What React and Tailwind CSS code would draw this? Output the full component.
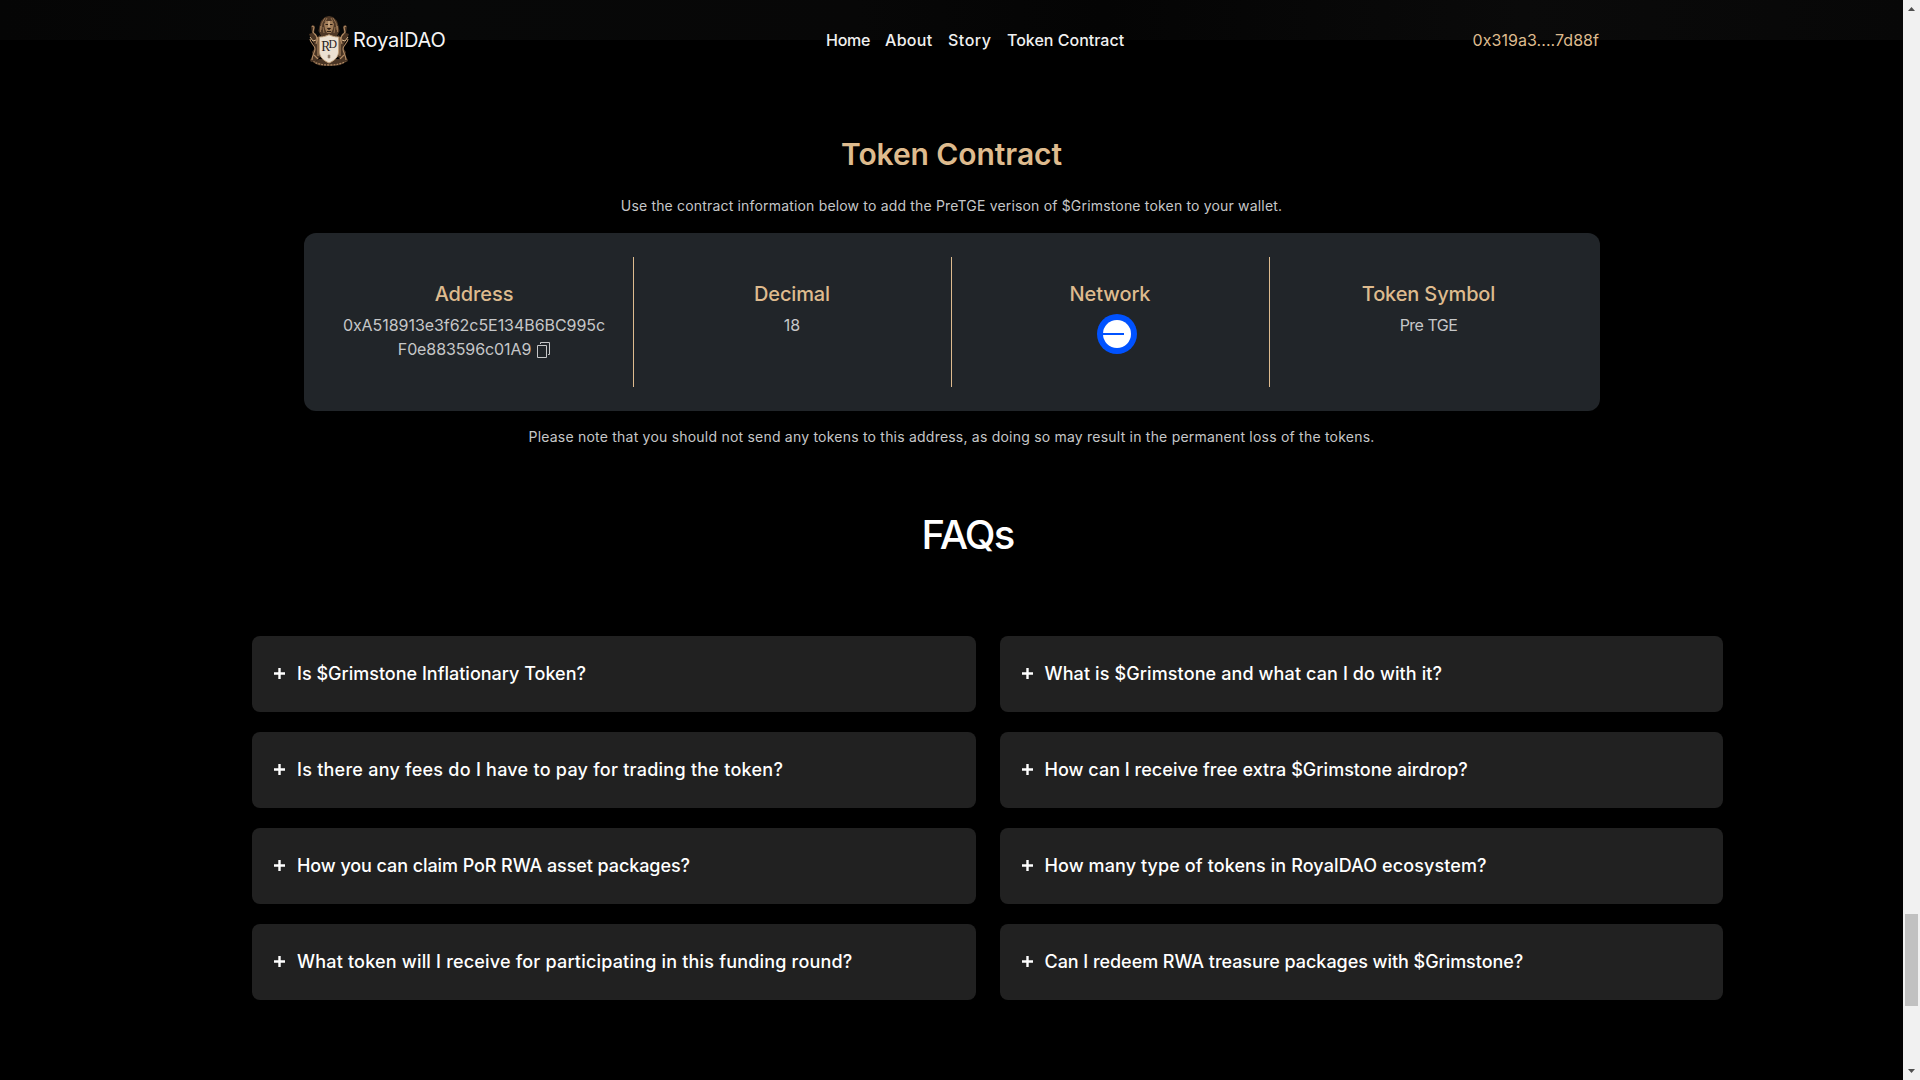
const leftFaqs = [
  { q: "Is $Grimstone Inflationary Token?", cls: "tracking-[0px]" },
  { q: "Is there any fees do I have to pay for trading the token?", cls: "tracking-[0.25px]" },
  { q: "How you can claim PoR RWA asset packages?", cls: "tracking-[-0.08px]" },
  { q: "What token will I receive for participating in this funding round?", cls: "tracking-[0.19px]" },
];

const rightFaqs = [
  { q: "What is $Grimstone and what can I do with it?", cls: "tracking-[0.11px]" },
  { q: "How can I receive free extra $Grimstone airdrop?", cls: "tracking-[0.03px]" },
  { q: "How many type of tokens in RoyalDAO ecosystem?", cls: "tracking-[0.1px]" },
  { q: "Can I redeem RWA treasure packages with $Grimstone?", cls: "tracking-[-0.05px]" },
];

function Supporter() {
  return (
    <g>
      <path d="M9 16l3-1 1 3-1 5 3 4 3-2v22l-4 4-5 1-1-2 3-4-1-4 3-4-1-4-3-5-2-5 3-1z" fill="#4a3524" />
      <path d="M10 16l2 1-1 5 4 5M8 29c0 4 5 6 5 10s-3 6-3 11M13 24c3 3 2 7 1 10M16 27v19M12 45l4 4" stroke="#b38c65" strokeWidth="1.1" />
      <path d="M8 27l3 4 3-1" stroke="#dcb98d" />
    </g>
  );
}

function Crest() {
  return (
    <svg viewBox="6 4 44 54" className="h-[54px] w-11 shrink-0" fill="none">
      {/* base scrollwork */}
      <path d="M10 50c2 5 8 6 17 6s15-1 18-6c-3 1-5 1-7-1H17c-2 2-4 2-7 1z" fill="#4a3524" />
      <path d="M11 51c4 3 9 4 16 4s13-1 17-4" stroke="#b08a64" strokeWidth="1.3" strokeDasharray="2 1" />
      {/* supporters */}
      <Supporter />
      <g transform="matrix(-1 0 0 1 54 0)">
        <Supporter />
      </g>
      {/* lion head */}
      <path d="M27 6l4 1 4 4 1.500 5 1 5-2.500 5H19l-2.500-5 1-5 1.500-5 4-4z" fill="#4f3826" />
      <path d="M23 8l-3 5-1 7M31 8l3 5 1 7M21 17l1 6M33 17l-1 6M25 8l-2 4M29 8l2 4M18.500 16v6M35.500 16v6" stroke="#9c7853" strokeWidth=".9" />
      <path d="M24 11h6l2 3-1 5-2 4h-4l-2-4-1-5z" fill="#a07c58" />
      <path d="M23.500 14.500h2.500M28 14.500h2.500M25.500 18.500h3l-1.500 1zM25 21.500h4" stroke="#2a1c12" />
      <path d="M27 11v6" stroke="#e3c29a" />
      {/* shield */}
      <path d="M17.500 27c4 0 7-1 9.500-2.200 2.500 1.200 5.500 2.200 9.500 2.200v15c0 5-4 8.500-9.500 11-5.500-2.500-9.500-6-9.500-11z" fill="#ece1d2" stroke="#c3a27c" />
      <text x="19.200" y="41" fontSize="15" fontFamily="Liberation Serif, serif" fill="#29221d" textLength="9" lengthAdjust="spacingAndGlyphs">R</text>
      <text x="26.500" y="38" fontSize="12" fontFamily="Liberation Serif, serif" fill="#29221d" textLength="8.500" lengthAdjust="spacingAndGlyphs">D</text>
      <path d="M26 45h2v3h-2z" fill="#8a7663" stroke="#a08b76" strokeWidth=".6" />
    </svg>
  );
}

function CopyIcon() {
  return (
    <svg viewBox="0 0 13 16" className="mt-0.5 h-4 w-[13px]" fill="none" stroke="#c6c7c8">
      <path d="M0.500 3.500h9v12h-9z" />
      <path d="M3.500 2V.5h9v12H11" />
    </svg>
  );
}

function BaseIcon() {
  return (
    <svg viewBox="0 0 40 40" className="size-10">
      <circle cx="20" cy="20" r="20" fill="#0052ff" />
      <circle cx="20" cy="20" r="14" fill="#fff" />
      <path d="M5 19h22v2H5z" fill="#0052ff" />
    </svg>
  );
}

function Column({ title, last, titleClass = "", children }) {
  return (
    <div className={"flex h-[130px] w-[318px] flex-col items-center pt-[21px] " + (last ? "" : "border-r border-[#debb8e]")}>
      <h3 className={"text-[20px] leading-8 font-medium text-[#debb8e] " + titleClass}>{title}</h3>
      <div className="mt-[3px] flex flex-col items-center text-[16px] leading-6 text-[#c6c7c8]">{children}</div>
    </div>
  );
}

function FaqCard({ q, cls }) {
  return (
    <button className="flex h-[76px] w-full items-center rounded-lg bg-[#212121] pl-[22px] text-left">
      <svg viewBox="0 0 11 11" className="mr-3 mb-px size-[11px]" fill="#fff">
        <path d="M4.300 0h2.400v4.300H11v2.400H6.700V11H4.300V6.700H0V4.300h4.300z" />
      </svg>
      <span className={"text-[18px] leading-6 font-medium text-white " + cls}>{q}</span>
    </button>
  );
}

export default function App() {
  return (
    <div className="flex h-[1080px] w-full overflow-hidden bg-black font-['Inter',sans-serif] text-white">
      <div className="w-[1903px] shrink-0 bg-[linear-gradient(90deg,#050505,#070808_22%,#070707_45%,#040404_58%,#0a0a0a_80%,#070707)] bg-[length:100%_40px] bg-no-repeat">
        <header className="mx-auto flex h-[81px] w-[1295px] items-center">
          <a className="flex w-[522px] items-center pl-1">
            <Crest />
            <span className="-mt-[2px] pl-px text-[20px] tracking-[-0.1px] text-[#f5f5f5]">RoyalDAO</span>
          </a>
          <nav className="flex pb-px text-[16px] font-medium whitespace-nowrap text-[#f0f0f0]">
            <a className="w-[59px] tracking-[-0.25px]">Home</a>
            <a className="w-[63px] tracking-[0.3px]">About</a>
            <a className="w-[59px] tracking-[0.5px]">Story</a>
            <a className="tracking-[0px]">Token Contract</a>
          </nav>
          <span className="ml-auto pb-px text-[16px] tracking-[0.05px] text-[#debb8e]">0x319a3....7d88f</span>
        </header>

        <section className="flex flex-col items-center pt-[53px]">
          <h2 className="text-[30px] leading-10 font-semibold tracking-[-0.08px] text-[#debb8e]">Token Contract</h2>
          <p className="mt-[22px] text-[14px] leading-5 tracking-[0.175px] text-[#c6c7c8]">
            Use the contract information below to add the PreTGE verison of $Grimstone token to your wallet.
          </p>
          <div className="mt-[17px] flex h-[178px] w-[1296px] rounded-xl bg-[#212529] px-3 py-6">
            <Column title="Address" titleClass="tracking-[-0.1px]">
              <span className="tracking-[-0.05px]">0xA518913e3f62c5E134B6BC995c</span>
              <span className="flex items-center gap-[6px] tracking-[-0.1px]">
                F0e883596c01A9 <CopyIcon />
              </span>
            </Column>
            <Column title="Decimal" titleClass="tracking-[-0.15px]">
              <span>18</span>
            </Column>
            <Column title="Network" titleClass="tracking-[-0.1px]">
              <div className="pt-px pl-[13px]">
                <BaseIcon />
              </div>
            </Column>
            <Column title="Token Symbol" titleClass="tracking-[-0.14px]" last>
              <span className="tracking-[-0.5px]">Pre TGE</span>
            </Column>
          </div>
          <p className="mt-4 text-[14px] leading-5 tracking-[0.215px] text-[#c6c7c8]">
            Please note that you should not send any tokens to this address, as doing so may result in the permanent loss
            of the tokens.
          </p>
        </section>

        <section className="pt-[64px]">
          <h2 className="pl-8 text-center text-[40px] leading-[48px] font-medium tracking-[-1.8px]">FAQs</h2>
          <div className="mt-[77px] ml-[252px] grid w-[1471px] grid-cols-2 gap-6">
            {[leftFaqs, rightFaqs].map((list, i) => (
              <div key={i} className="flex flex-col gap-5">
                {list.map((f) => (
                  <FaqCard key={f.q} q={f.q} cls={f.cls} />
                ))}
              </div>
            ))}
          </div>
        </section>
      </div>

      <div className="flex w-[17px] shrink-0 flex-col items-center bg-[#f1f1f1] pt-[7px] pb-[7px]">
        <svg viewBox="0 0 7 4" className="h-1 w-[7px]" fill="#505050">
          <path d="M3.500 0L7 4H0z" />
        </svg>
        <div className="mt-[903px] h-[92px] w-[13px] bg-[#c1c1c1]" />
        <svg viewBox="0 0 7 4" className="mt-auto h-1 w-[7px]" fill="#505050">
          <path d="M0 0h7L3.500 4z" />
        </svg>
      </div>
    </div>
  );
}
